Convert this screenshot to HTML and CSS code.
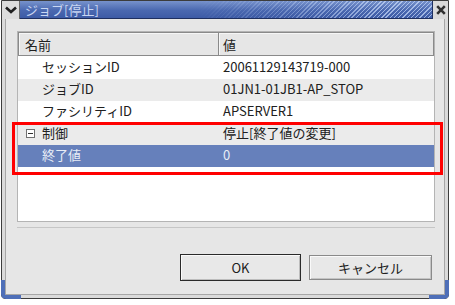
FILE: index.html
```html
<!DOCTYPE html>
<html lang="ja">
<head>
<meta charset="utf-8">
<title>ジョブ[停止]</title>
<link rel="stylesheet" href="styles.css">
</head>
<body>
<div class="window">
  <div class="titlebar">
    <div class="menu-btn">
      <svg width="12" height="8" viewBox="0 0 12 8"><path d="M1 1.5 L6 6 L11 1.5" fill="none" stroke="#202020" stroke-width="2.6"/></svg>
    </div>
    <div class="title">
      <span class="title-text">ジョブ[停止]</span>
      <span class="stripes"></span>
    </div>
    <div class="close-btn">
      <svg width="10" height="10" viewBox="0 0 10 10"><path d="M1.2 1.2 L8.8 8.8 M8.8 1.2 L1.2 8.8" stroke="#303030" stroke-width="2.6"/></svg>
    </div>
  </div>
  <div class="frame">
    <div class="main">
      <div class="table">
        <div class="thead">
          <div class="th col-name">名前</div>
          <div class="th col-val">値</div>
        </div>
        <div class="tbody">
          <div class="row">
            <div class="cell col-name indent">セッションID</div>
            <div class="cell col-val">20061129143719-000</div>
          </div>
          <div class="row alt">
            <div class="cell col-name indent">ジョブID</div>
            <div class="cell col-val">01JN1-01JB1-AP_STOP</div>
          </div>
          <div class="row">
            <div class="cell col-name indent">ファシリティID</div>
            <div class="cell col-val">APSERVER1</div>
          </div>
          <div class="row alt">
            <div class="cell col-name tree"><span class="toggle"></span>制御</div>
            <div class="cell col-val">停止[終了値の変更]</div>
          </div>
          <div class="row selected">
            <div class="cell col-name indent">終了値</div>
            <div class="cell col-val">0</div>
          </div>
        </div>
      </div>
      <div class="separator"></div>
      <div class="buttons">
        <button class="btn btn-default">OK</button>
        <button class="btn btn-cancel">キャンセル</button>
      </div>
    </div>
  </div>
  <div class="highlight-box"></div>
  <div class="corner corner-left"></div>
  <div class="corner corner-right"></div>
</div>
</body>
</html>
```

FILE: styles.css
```css
* { box-sizing: border-box; }
html, body { margin: 0; padding: 0; background: #ffffff; }
body {
  font-family: "Noto Sans CJK JP", "Liberation Sans", sans-serif;
  font-size: 13px;
  color: #202020;
}
.window {
  position: relative;
  margin-left: 1px;
  width: 448px;
  height: 299px;
  border: 1px solid #3c3c3c;
  border-radius: 0 0 4px 4px;
  background: #e6e6e6;
  display: flex;
  flex-direction: column;
}
.titlebar {
  display: flex;
  height: 18px;
  flex: none;
  background: #d8d8d8;
}
.menu-btn {
  width: 18px;
  display: flex;
  align-items: center;
  justify-content: center;
  background: #dcdcdc;
  border-right: 1px solid #6a6a6a;
}
.title {
  flex: 1;
  display: flex;
  align-items: center;
  background: linear-gradient(#7792cc, #4a68b0 55%, #3d5ba6);
  border-bottom: 1px solid #1e2f60;
  border-right: 1px solid #1e2f60;
  overflow: hidden;
}
.title-text {
  color: #c9d6f2;
  font-size: 13px;
  padding-left: 5px;
  white-space: nowrap;
  line-height: 16px;
}
.stripes {
  flex: 1;
  align-self: stretch;
  margin-left: 20px;
  background: repeating-linear-gradient(135deg, rgba(255,255,255,0) 0 2px, rgba(200,218,250,0.7) 2px 3px);
  -webkit-mask-image: linear-gradient(to right, transparent 25%, #000 85%);
  mask-image: linear-gradient(to right, transparent 25%, #000 85%);
}
.close-btn {
  width: 15px;
  display: flex;
  align-items: center;
  justify-content: center;
  background: #dadada;
}
.frame {
  flex: 1;
  display: flex;
  border: 3px solid #dadada;
  border-top: 0;
}
.main {
  flex: 1;
  display: flex;
  flex-direction: column;
  border: 1px solid #a6a6a6;
  border-top: 0;
  padding: 12px 9px 0 11px;
  background: #e6e6e6;
}
.table {
  height: 191px;
  background: #ffffff;
  border: 1px solid #b4b4b4;
  display: flex;
  flex-direction: column;
}
.thead {
  display: flex;
  height: 24px;
  flex: none;
}
.th {
  background: #e6e6e6;
  border: 1px solid #8a8a8a;
  box-shadow: inset 1px 1px 0 #f6f6f6;
  display: flex;
  align-items: center;
  line-height: 1;
}
.th.col-name { width: 201px; padding-left: 6px; }
.th.col-val { flex: 1; padding-left: 4px; border-left: 0; }
.tbody { padding-top: 1px; }
.row {
  display: flex;
  height: 22px;
  align-items: center;
}
.row.alt { background: #ebebeb; }
.row.selected { background: #6680bb; color: #e8edf6; }
.cell { line-height: 20px; padding-bottom: 2px; white-space: nowrap; }
.cell.col-name { width: 201px; }
.cell.col-val { flex: 1; padding-left: 4px; }
.cell.indent { padding-left: 24px; }
.cell.tree { padding-left: 8px; display: flex; align-items: center; }
.toggle {
  position: relative;
  width: 9px;
  height: 9px;
  border: 1px solid #707070;
  background: #ffffff;
  margin-right: 7px;
}
.toggle::after {
  content: "";
  position: absolute;
  left: 1px;
  right: 1px;
  top: 3px;
  height: 1px;
  background: #303030;
}
.separator {
  margin-top: 5px;
  height: 1px;
  background: #c6c6c6;
}
.buttons {
  display: flex;
  justify-content: flex-end;
  align-items: center;
  gap: 8px;
  margin-top: 26px;
  padding-right: 3px;
}
.btn {
  font-family: "Noto Sans CJK JP", "Liberation Sans", sans-serif;
  font-size: 13px;
  color: #202020;
  height: 25px;
  background: #e8e8e8;
  border: 1px solid #8a8a8a;
  box-shadow: inset 1px 1px 0 #fafafa, inset -1px -1px 0 #c4c4c4;
  padding: 0;
  line-height: 1;
}
.btn-cancel { width: 123px; }
.btn-default {
  width: 121px;
  height: 27px;
  border: 1px solid #2a2a2a;
  box-shadow: inset 1px 1px 0 #fafafa, inset -1px -1px 0 #bcbcbc;
}
.highlight-box {
  position: absolute;
  left: 10px;
  top: 121px;
  width: 431px;
  height: 53px;
  border: 3px solid #ff0000;
}
.corner {
  position: absolute;
  bottom: -1px;
  width: 20px;
  height: 19px;
  border-color: #4f6fb8;
  border-style: solid;
}
.corner-left {
  left: -1px;
  border-width: 0 0 4px 4px;
  border-radius: 0 0 0 5px;
}
.corner-right {
  right: -1px;
  border-width: 0 4px 4px 0;
  border-radius: 0 0 5px 0;
}
```
